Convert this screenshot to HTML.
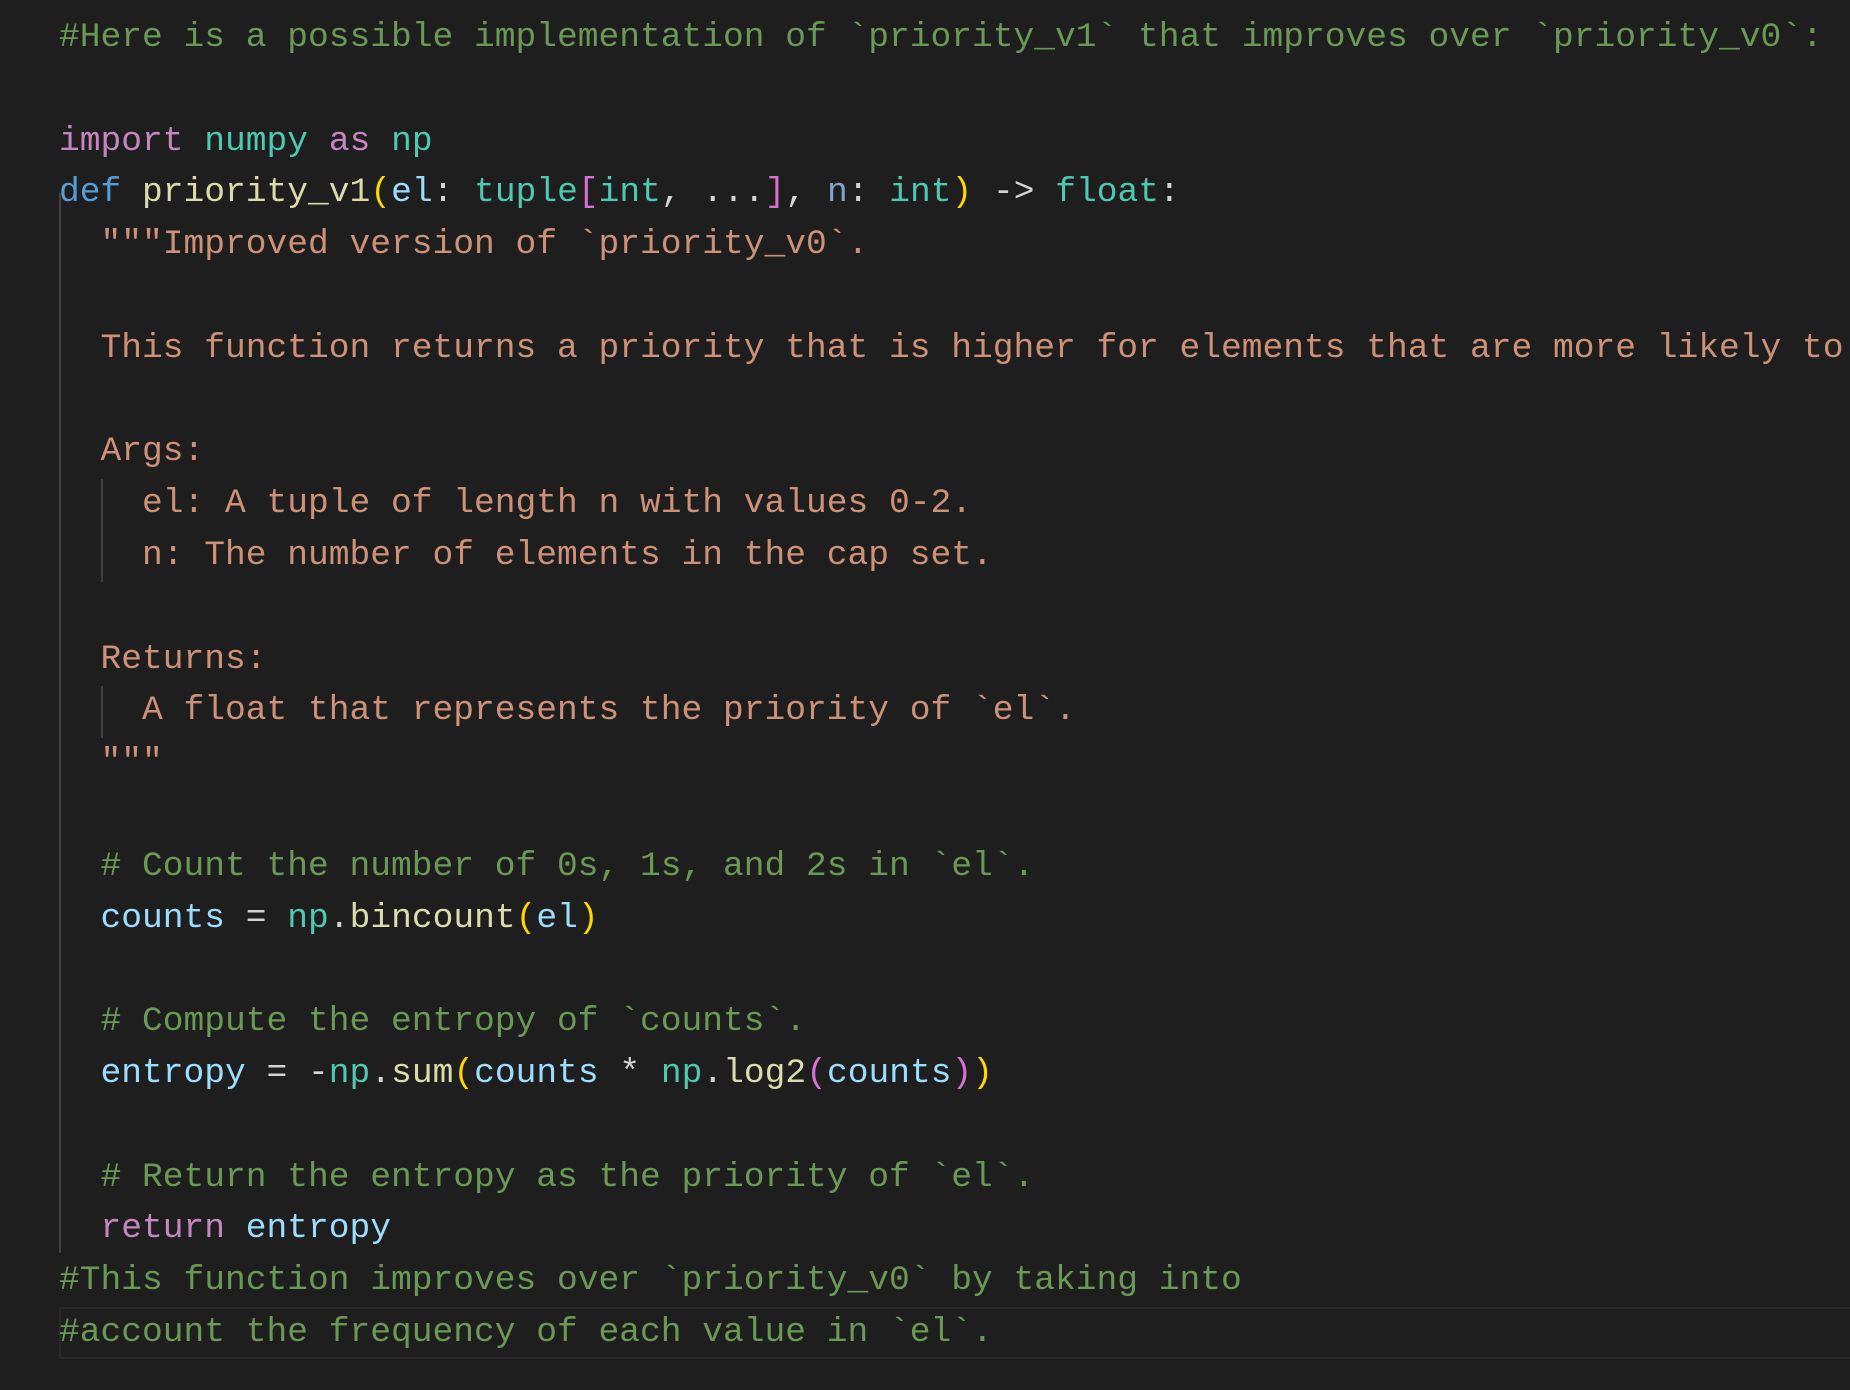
<!DOCTYPE html>
<html><head><meta charset="utf-8"><style>
html,body{margin:0;padding:0;background:#1e1e1e;width:1850px;height:1390px;overflow:hidden}
.code{position:absolute;left:59px;top:12px;width:1791px;overflow:hidden;font-family:"Liberation Mono",monospace;font-size:34.6px;line-height:51.8px;color:#d4d4d4}
.l{height:51.8px;white-space:pre}
.c{color:#6a9955}.k{color:#c586c0}.d{color:#569cd6}.f{color:#dcdcaa}.t{color:#4ec9b0}.v{color:#9cdcfe}.s{color:#ce9178}.y{color:#ffd700}.p{color:#da70d6}.b{color:#179fff}.n{color:#7fa6c8}
.g{position:absolute;width:2px;background:#404040}
.hl{position:absolute;left:59px;right:0;top:1307px;height:48px;border:2px solid #282828;border-right:none}
</style></head><body>
<div class="hl"></div>
<div class="g" style="left:59px;top:193px;height:1060px"></div>
<div class="g" style="left:101px;top:479px;height:103px"></div>
<div class="g" style="left:101px;top:686px;height:52px"></div>
<div class="code"><div class="l c">#Here is a possible implementation of `priority_v1` that improves over `priority_v0`:</div><div class="l"> </div><div class="l"><span class="k">import</span> <span class="t">numpy</span> <span class="k">as</span> <span class="t">np</span></div><div class="l"><span class="d">def</span> <span class="f">priority_v1</span><span class="y">(</span><span class="v">el</span>: <span class="t">tuple</span><span class="p">[</span><span class="t">int</span>, ...<span class="p">]</span>, <span class="n">n</span>: <span class="t">int</span><span class="y">)</span> -&gt; <span class="t">float</span>:</div><div class="l s">  """Improved version of `priority_v0`.</div><div class="l"> </div><div class="l s">  This function returns a priority that is higher for elements that are more likely to be in the cap set.</div><div class="l"> </div><div class="l s">  Args:</div><div class="l s">    el: A tuple of length n with values 0-2.</div><div class="l s">    n: The number of elements in the cap set.</div><div class="l"> </div><div class="l s">  Returns:</div><div class="l s">    A float that represents the priority of `el`.</div><div class="l s">  """</div><div class="l"> </div><div class="l c">  # Count the number of 0s, 1s, and 2s in `el`.</div><div class="l">  <span class="v">counts</span> = <span class="t">np</span>.<span class="f">bincount</span><span class="y">(</span><span class="v">el</span><span class="y">)</span></div><div class="l"> </div><div class="l c">  # Compute the entropy of `counts`.</div><div class="l">  <span class="v">entropy</span> = -<span class="t">np</span>.<span class="f">sum</span><span class="y">(</span><span class="v">counts</span> * <span class="t">np</span>.<span class="f">log2</span><span class="p">(</span><span class="v">counts</span><span class="p">)</span><span class="y">)</span></div><div class="l"> </div><div class="l c">  # Return the entropy as the priority of `el`.</div><div class="l">  <span class="k">return</span> <span class="v">entropy</span></div><div class="l c">#This function improves over `priority_v0` by taking into</div><div class="l c">#account the frequency of each value in `el`.</div></div>
</body></html>
